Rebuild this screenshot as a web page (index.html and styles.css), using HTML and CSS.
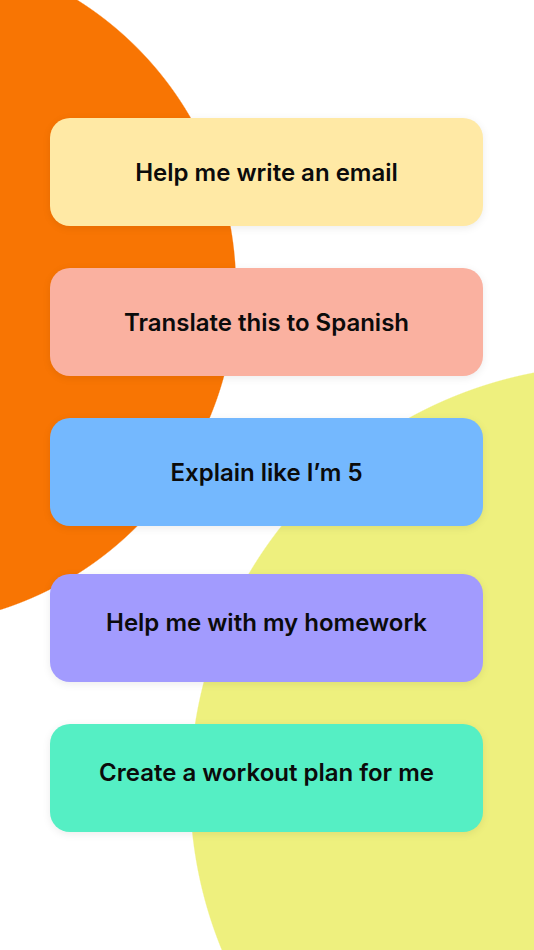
FILE: index.html
```html
<!DOCTYPE html>
<html lang="en">
<head>
<meta charset="utf-8">
<title>Prompts</title>
<link rel="stylesheet" href="styles.css">
</head>
<body>
<main class="screen">
  <div class="prompts">
    <button class="card card-yellow"><span>Help me write an email</span></button>
    <button class="card card-salmon"><span>Translate this to Spanish</span></button>
    <button class="card card-blue"><span>Explain like I’m 5</span></button>
    <button class="card card-purple card-raised"><span>Help me with my homework</span></button>
    <button class="card card-green card-raised"><span>Create a workout plan for me</span></button>
  </div>
</main>
</body>
</html>
```
FILE: styles.css
```css
html, body {
  margin: 0;
  padding: 0;
}
body {
  width: 534px;
  height: 950px;
  overflow: hidden;
  background: #ffffff;
  font-family: Inter, "Noto Sans", "Liberation Sans", sans-serif;
}
.screen {
  width: 534px;
  height: 950px;
  box-sizing: border-box;
  padding: 118px 0 0 50px;
  background:
    radial-gradient(circle 339px at -103px 287px, #f87503 338.4px, rgba(248,117,3,0) 339.6px),
    radial-gradient(circle 424px at 614px 789px, #eef07e 423.4px, rgba(238,240,126,0) 424.6px),
    #ffffff;
}
.prompts {
  width: 433px;
  display: flex;
  flex-direction: column;
  gap: 42px;
}
.card {
  height: 108px;
  box-sizing: border-box;
  border: none;
  border-radius: 20px;
  display: flex;
  align-items: center;
  justify-content: center;
  font-family: inherit;
  font-size: 24px;
  font-weight: 600;
  letter-spacing: 0;
  color: #0b0b0b;
  box-shadow: 0 2px 8px rgba(0, 0, 0, 0.08);
  padding: 0;
  cursor: pointer;
}
.card-raised {
  padding-bottom: 12px;
}
.card-yellow { background: #ffe9a5; }
.card-salmon { background: #fab1a0; }
.card-blue { background: #74b8fe; }
.card-purple {
  background: #a29bfe;
  margin-top: 6px;
}
.card-green { background: #55efc4; }
```
